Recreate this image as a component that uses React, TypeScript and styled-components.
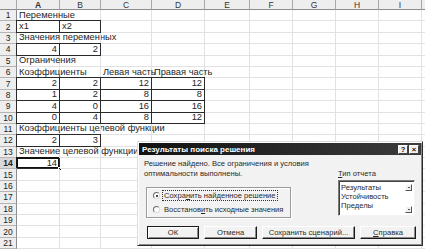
import styled, { createGlobalStyle } from 'styled-components';

const GlobalStyle = createGlobalStyle`
  html, body {
    margin: 0;
    padding: 0;
    background: #ffffff;
    overflow: hidden;
  }
  body {
    font-family: 'Liberation Sans', Arial, sans-serif;
  }
`;

const Page = styled.div`
  position: relative;
  width: 425px;
  height: 249px;
  overflow: hidden;
  background: #ffffff;
`;

const Sheet = styled.div`
  display: grid;
  grid-template-columns: 17px 43px 41px 51px 53px 45px 43px 43px 43px 43px 1fr;
  grid-template-rows: 10px;
  grid-auto-rows: 11.4px;
  font-size: 9.3px;
  color: #262626;
`;

const ColHead = styled.div<{ $active?: boolean }>`
  display: flex;
  align-items: center;
  justify-content: center;
  background: #eeeeee;
  border-right: 1px solid #a8a8a8;
  border-bottom: 1px solid #8c8c8c;
  box-sizing: border-box;
  font-size: 8.5px;
  font-weight: ${p => (p.$active ? 700 : 400)};
  color: #333;
`;

const RowHead = styled.div<{ $active?: boolean }>`
  display: flex;
  align-items: center;
  justify-content: center;
  background: ${p => (p.$active ? '#d8d8d8' : '#eeeeee')};
  border-right: 1px solid #8c8c8c;
  border-bottom: 1px solid #b4b4b4;
  box-sizing: border-box;
  font-size: 8.5px;
  font-weight: ${p => (p.$active ? 700 : 400)};
  color: #222;
`;

const Cell = styled.div<{ $num?: boolean; $boxed?: boolean; $active?: boolean }>`
  position: relative;
  display: flex;
  align-items: center;
  justify-content: ${p => (p.$num ? 'flex-end' : 'flex-start')};
  padding: 0 2px;
  box-sizing: border-box;
  white-space: nowrap;
  overflow: visible;
  line-height: 1;
  border-right: 1px solid ${p => (p.$boxed || p.$active ? '#2a2a2a' : '#e2e2e2')};
  border-bottom: 1px solid ${p => (p.$boxed || p.$active ? '#2a2a2a' : '#e2e2e2')};
  box-shadow: ${p =>
    p.$active
      ? 'inset 1px 1px 0 #111, inset -1px -1px 0 #111, -1px -1px 0 #111'
      : p.$boxed
      ? '-1px 0 0 #2a2a2a, 0 -1px 0 #2a2a2a, -1px -1px 0 #2a2a2a'
      : 'none'};
`;

const FillHandle = styled.span`
  position: absolute;
  right: -3px;
  bottom: -3px;
  width: 4px;
  height: 4px;
  background: #111;
  border: 1px solid #fff;
  box-sizing: border-box;
`;

const Dialog = styled.div`
  position: absolute;
  left: 137px;
  top: 141px;
  width: 286px;
  height: 105px;
  box-sizing: border-box;
  background: #f2f2f2;
  border: 1px solid #dcdcdc;
  border-right-color: #2a2a2a;
  border-bottom-color: #2a2a2a;
  box-shadow: inset 1px 1px 0 #ffffff, inset -1px -1px 0 #8a8a8a;
  display: flex;
  flex-direction: column;
  padding: 1px;
  font-size: 7.6px;
  color: #2a2a2a;
`;

const TitleBar = styled.div`
  display: flex;
  align-items: center;
  justify-content: space-between;
  height: 12px;
  padding: 0 2px 0 3px;
  background: linear-gradient(90deg, #121212, #3c3c3c);
  color: #ffffff;
  font-weight: 700;
  font-size: 8px;
`;

const TitleButtons = styled.div`
  display: flex;
  gap: 1px;
`;

const TitleButton = styled.div`
  width: 10px;
  height: 9px;
  display: flex;
  align-items: center;
  justify-content: center;
  background: #f0f0f0;
  color: #111;
  font-size: 7.5px;
  font-weight: 700;
  box-sizing: border-box;
  border: 1px solid #fff;
  border-right-color: #444;
  border-bottom-color: #444;
`;

const Body = styled.div`
  flex: 1;
  display: flex;
  padding: 4px 6px 0 5px;
  gap: 6px;
`;

const LeftCol = styled.div`
  flex: 1;
  display: flex;
  flex-direction: column;
`;

const Message = styled.div`
  line-height: 10px;
  white-space: nowrap;
`;

const GroupBox = styled.div`
  margin-top: 8px;
  margin-left: 2px;
  width: 145px;
  height: 31px;
  box-sizing: border-box;
  border: 1px solid #9a9a9a;
  box-shadow: 1px 1px 0 #ffffff, inset 1px 1px 0 #ffffff;
  display: flex;
  flex-direction: column;
  justify-content: center;
  gap: 5px;
  padding-left: 6px;
`;

const RadioRow = styled.label`
  display: flex;
  align-items: center;
  gap: 3px;
  white-space: nowrap;
`;

const RadioDot = styled.span<{ $checked?: boolean }>`
  position: relative;
  width: 7px;
  height: 7px;
  border-radius: 50%;
  background: #ffffff;
  border: 1px solid #6a6a6a;
  border-right-color: #dcdcdc;
  border-bottom-color: #dcdcdc;
  box-sizing: border-box;
  &::after {
    content: '';
    display: ${p => (p.$checked ? 'block' : 'none')};
    position: absolute;
    left: 1.5px;
    top: 1.5px;
    width: 2px;
    height: 2px;
    border-radius: 50%;
    background: #111;
  }
`;

const RadioText = styled.span<{ $focused?: boolean }>`
  padding: 0 1px;
  outline: ${p => (p.$focused ? '1px dotted #333' : 'none')};
`;

const Key = styled.span`
  text-decoration: underline;
`;

const RightCol = styled.div`
  width: 77px;
  display: flex;
  flex-direction: column;
  padding-top: 10px;
`;

const ListLabel = styled.div`
  margin-bottom: 2px;
`;

const ListBox = styled.div`
  position: relative;
  height: 36px;
  box-sizing: border-box;
  background: #ffffff;
  border: 1px solid #7a7a7a;
  border-right-color: #f4f4f4;
  border-bottom-color: #f4f4f4;
  box-shadow: inset 1px 1px 0 #404040;
  padding: 2px 0 0 2px;
  line-height: 9px;
`;

const ScrollArrow = styled.div<{ $bottom?: boolean }>`
  position: absolute;
  right: 2px;
  ${p => (p.$bottom ? 'bottom: 2px;' : 'top: 3px;')}
  width: 7px;
  height: 7px;
  box-sizing: border-box;
  background: #f0f0f0;
  border: 1px solid #fff;
  border-right-color: #555;
  border-bottom-color: #555;
  display: flex;
  align-items: center;
  justify-content: center;
  &::after {
    content: '';
    width: 2px;
    height: 1px;
    background: #555;
  }
`;

const ButtonRow = styled.div`
  display: flex;
  gap: 5px;
  padding: 0 0 5px 8px;
`;

const Button = styled.div<{ $w: number; $default?: boolean }>`
  width: ${p => p.$w}px;
  height: 13px;
  box-sizing: border-box;
  display: flex;
  align-items: center;
  justify-content: center;
  background: #f2f2f2;
  border: 1px solid ${p => (p.$default ? '#1a1a1a' : '#ffffff')};
  border-right-color: #1a1a1a;
  border-bottom-color: #1a1a1a;
  box-shadow: ${p => (p.$default ? 'inset 1px 1px 0 #fff, inset -1px -1px 0 #8a8a8a' : 'inset -1px -1px 0 #8a8a8a')};
  white-space: nowrap;
`;

type CellData = { v?: string | number; boxed?: boolean; active?: boolean };

const b = (v: string | number): CellData => ({ v, boxed: true });

const rows: CellData[][] = [
  [{ v: 'Переменные' }],
  [b('x1'), b('x2')],
  [{ v: 'Значения переменных' }],
  [b(4), b(2)],
  [{ v: 'Ограничения' }],
  [{ v: 'Коэффициенты' }, {}, { v: 'Левая часть' }, { v: 'Правая часть' }],
  [b(2), b(2), b(12), b(12)],
  [b(1), b(2), b(8), b(8)],
  [b(4), b(0), b(16), b(16)],
  [b(0), b(4), b(8), b(12)],
  [{ v: 'Коэффициенты целевой функции' }],
  [b(2), b(3)],
  [{ v: 'Значение целевой функции' }],
  [{ v: 14, active: true }],
  [], [], [], [], [], [], [],
];

const columns = ['A', 'B', 'C', 'D', 'E', 'F', 'G', 'H', 'I', ''];

const App = () => {
  return (
    <Page>
      <GlobalStyle />
      <Sheet>
        <ColHead />
        {columns.map(c => (
          <ColHead key={c || 'x'} $active={c === 'A'}>
            {c}
          </ColHead>
        ))}
        {rows.map((row, r) => (
          <>
            <RowHead key={'h' + r} $active={r === 13}>
              {r + 1}
            </RowHead>
            {columns.map((c, i) => {
              const cell = row[i] || {};
              const num = typeof cell.v === 'number';
              return (
                <Cell
                  key={r + c}
                  $num={num}
                  $boxed={cell.boxed}
                  $active={cell.active}
                >
                  {cell.v}
                  {cell.active && <FillHandle />}
                </Cell>
              );
            })}
          </>
        ))}
      </Sheet>

      <Dialog>
        <TitleBar>
          <span>Результаты поиска решения</span>
          <TitleButtons>
            <TitleButton>?</TitleButton>
            <TitleButton>×</TitleButton>
          </TitleButtons>
        </TitleBar>
        <Body>
          <LeftCol>
            <Message>
              Решение найдено. Все ограничения и условия
              <br />
              оптимальности выполнены.
            </Message>
            <GroupBox>
              <RadioRow>
                <RadioDot $checked />
                <RadioText $focused>
                  Сохра<Key>н</Key>ить найденное решение
                </RadioText>
              </RadioRow>
              <RadioRow>
                <RadioDot />
                <RadioText>
                  Восстанов<Key>и</Key>ть исходные значения
                </RadioText>
              </RadioRow>
            </GroupBox>
          </LeftCol>
          <RightCol>
            <ListLabel>
              <Key>Т</Key>ип отчета
            </ListLabel>
            <ListBox>
              <div>Результаты</div>
              <div>Устойчивость</div>
              <div>Пределы</div>
              <ScrollArrow />
              <ScrollArrow $bottom />
            </ListBox>
          </RightCol>
        </Body>
        <ButtonRow>
          <Button $w={52} $default>
            ОК
          </Button>
          <Button $w={53}>Отмена</Button>
          <Button $w={93}>
            Сохранить сценарий...
          </Button>
          <Button $w={56}>
            <Key>С</Key>правка
          </Button>
        </ButtonRow>
      </Dialog>
    </Page>
  );
};

export default App;
